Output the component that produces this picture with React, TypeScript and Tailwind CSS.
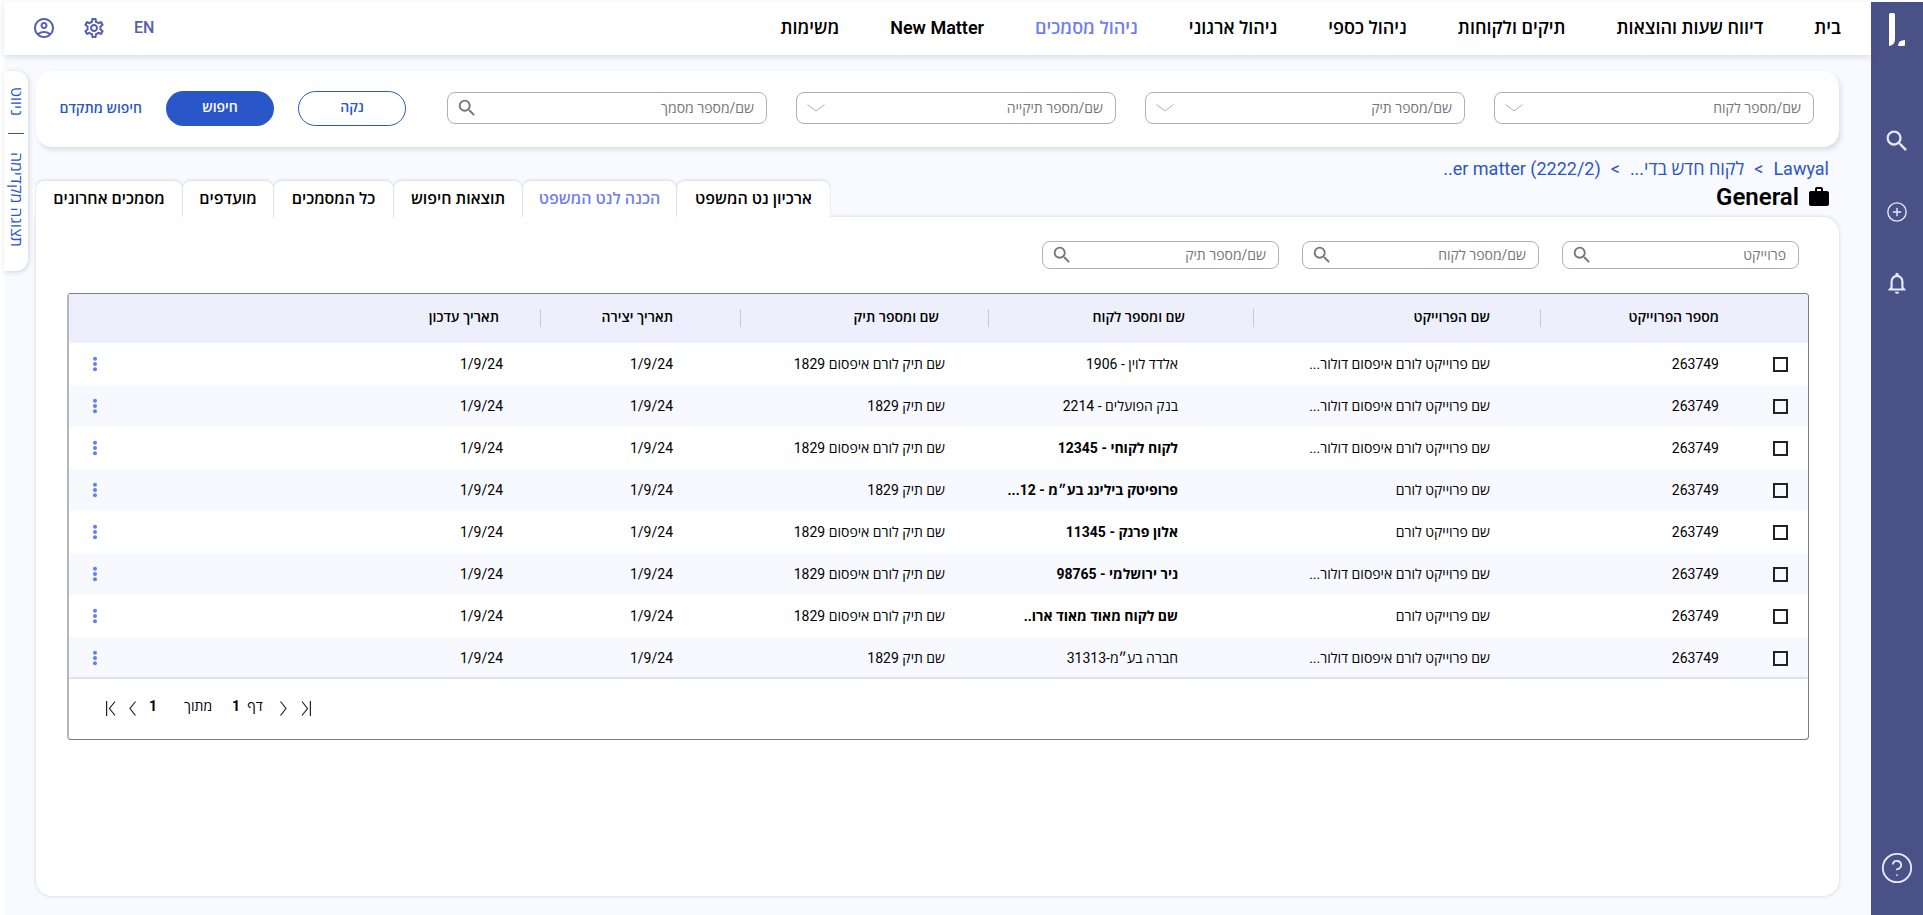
import React, { useState } from 'react';
import {
  MdNotificationsNone, MdOutlineAccountCircle, MdOutlineSettings, MdSearch, MdWork
} from 'react-icons/md';
import { CircleHelp, CirclePlus } from 'lucide-react';

interface Row {
  project: string;
  client: string;
  matter: string;
  bold?: boolean;
}

const NAV = [
  'בית', 'דיווח שעות והוצאות', 'תיקים ולקוחות', 'ניהול כספי',
  'ניהול ארגוני', 'ניהול מסמכים', 'New Matter', 'משימות'
];

const TABS = [
  { label: 'ארכיון נט המשפט', width: 'w-[153px]' },
  { label: 'הכנה לנט המשפט', width: 'w-[153px]' },
  { label: 'תוצאות חיפוש', width: 'w-32' },
  { label: 'כל המסמכים', width: 'w-[119px]' },
  { label: 'מועדפים', width: 'w-[90px]' },
  { label: 'מסמכים אחרונים', width: 'w-[146px]' }
];

const LONG_PROJECT = 'שם פרוייקט לורם איפסום דולור...';
const SHORT_PROJECT = 'שם פרוייקט לורם';
const LONG_MATTER = 'שם תיק לורם איפסום 1829';
const SHORT_MATTER = 'שם תיק 1829';

const ROWS: Row[] = [
  { project: LONG_PROJECT, client: 'אלדד לוין - 1906', matter: LONG_MATTER },
  { project: LONG_PROJECT, client: 'בנק הפועלים - 2214', matter: SHORT_MATTER },
  { project: LONG_PROJECT, client: 'לקוח לקוחי - 12345', matter: LONG_MATTER, bold: true },
  { project: SHORT_PROJECT, client: 'פרופיטק בילינג בע״מ - 12...', matter: SHORT_MATTER, bold: true },
  { project: SHORT_PROJECT, client: 'אלון פרנק - 11345', matter: LONG_MATTER, bold: true },
  { project: LONG_PROJECT, client: 'ניר ירושלמי - 98765', matter: LONG_MATTER, bold: true },
  { project: SHORT_PROJECT, client: 'שם לקוח מאוד מאוד ארו..', matter: LONG_MATTER, bold: true },
  { project: LONG_PROJECT, client: 'חברה בע״מ-31313', matter: SHORT_MATTER }
];

const Sidebar: React.FC = () => (
  <aside className="flex w-[52px] shrink-0 flex-col items-center bg-[#495187] pt-[11px] pb-[30px] text-[#e6e9ff]">
    <svg width="16" height="33" viewBox="0 0 16 33" fill="#fff" aria-hidden="true">
      <path d="M0 1.5Q0 0 1.5 0H4.500Q6 0 6 1.500V26Q6 32 0 33Z" />
      <path d="M9 33Q9 27 16 27V31.500Q16 33 14.500 33Z" />
    </svg>
    <button type="button" aria-label="חיפוש" className="mt-[81px]"><MdSearch size={28} /></button>
    <button type="button" aria-label="הוספה" className="mt-[46px]"><CirclePlus size={22} strokeWidth={1.5} /></button>
    <button type="button" aria-label="התראות" className="mt-[47px]"><MdNotificationsNone size={26} /></button>
    <button type="button" aria-label="עזרה" className="mt-auto"><CircleHelp size={34} strokeWidth={1.3} /></button>
  </aside>
);

const Header: React.FC = () => (
  <header className="relative z-10 flex h-[53px] items-center justify-between bg-white pr-[30px] pb-[2px] pl-[28px] shadow-[0_2px_6px_rgba(60,60,90,0.16)]">
    <nav className="flex gap-[51px] text-[18px] font-semibold text-black">
      {NAV.map(item => (
        <a key={item} href="#" className={item === 'ניהול מסמכים' ? 'text-[#6f7ff0]' : ''}>{item}</a>
      ))}
    </nav>
    <div className="flex items-center text-[#5560b0]">
      <button type="button" className="text-[16px] font-medium">EN</button>
      <button type="button" aria-label="הגדרות" className="mr-[28px]"><MdOutlineSettings size={24} /></button>
      <button type="button" aria-label="פרופיל" className="mr-[26px]"><MdOutlineAccountCircle size={24} /></button>
    </div>
  </header>
);

const SelectField: React.FC<{ label: string }> = ({ label }) => (
  <div className="relative max-w-[320px] flex-1">
    <select
      aria-label={label}
      className="h-8 w-full appearance-none rounded-lg border border-[#b0b0b0] bg-white pr-3 pl-9 text-[14px] text-[#757575]"
    >
      <option>{label}</option>
    </select>
    <svg className="pointer-events-none absolute top-3 left-[11px]" width="18" height="8" viewBox="0 0 18 8" fill="none" stroke="#b0b0b0">
      <path d="M.5.5 9 7l8.500-6.500" />
    </svg>
  </div>
);

const SearchField: React.FC<{ label: string; small?: boolean }> = ({ label, small }) => (
  <div className={small ? 'relative w-[237px]' : 'relative max-w-[320px] flex-1'}>
    <input
      type="text"
      aria-label={label}
      placeholder={label}
      className={`${small ? 'h-7' : 'h-8'} w-full rounded-lg border border-[#b0b0b0] bg-white pr-3 pl-9 text-[14px] placeholder:text-[#757575]`}
    />
    <MdSearch size={22} className={`absolute left-[9px] text-[#757575] ${small ? 'top-[3px]' : 'top-[5px]'}`} />
  </div>
);

const SearchBar: React.FC = () => (
  <form className="flex h-[76px] items-center rounded-2xl bg-white pr-[25px] pb-[2px] pl-[23px] shadow-[2px_3px_5px_rgba(0,0,0,0.12)]">
    <div className="flex flex-1 gap-[29px]">
      <SelectField label="שם/מספר לקוח" />
      <SelectField label="שם/מספר תיק" />
      <SelectField label="שם/מספר תיקייה" />
      <SearchField label="שם/מספר מסמך" />
    </div>
    <div className="mr-[41px] flex items-center gap-6 text-[14px] font-semibold">
      <button type="reset" className="h-[35px] w-[108px] rounded-full border border-[#2956c9] pb-[2px] text-[#2956c9]">נקה</button>
      <button type="button" className="h-[35px] w-[108px] rounded-full bg-[#2956c9] pb-[2px] text-white">חיפוש</button>
      <a href="#" className="w-[83px] whitespace-nowrap text-[#2956c9]">חיפוש מתקדם</a>
    </div>
  </form>
);

const TITLE_CELL = 'flex h-[18px] items-center';

const DocumentsTable: React.FC = () => (
  <table className="w-full table-fixed text-right text-[14px] text-black">
    <colgroup>
      <col className="w-[74px]" />
      <col className="w-[194px]" />
      <col className="w-[287px]" />
      <col className="w-[265px]" />
      <col className="w-[248px]" />
      <col className="w-[200px]" />
      <col />
      <col className="w-[56px]" />
    </colgroup>
    <thead>
      <tr className="h-[49px] bg-[#eeeffd]">
        <td />
        <th className="pb-[2px] font-semibold"><div className={`${TITLE_CELL} border-l border-[#c9c9c9] pr-[15px]`}>מספר הפרוייקט</div></th>
        <th className="pb-[2px] font-semibold"><div className={`${TITLE_CELL} border-l border-[#c9c9c9] pr-[50px]`}>שם הפרוייקט</div></th>
        <th className="pb-[2px] font-semibold"><div className={`${TITLE_CELL} border-l border-[#c9c9c9] pr-[68px]`}>שם ומספר לקוח</div></th>
        <th className="pb-[2px] font-semibold"><div className={`${TITLE_CELL} border-l border-[#c9c9c9] pr-[49px]`}>שם ומספר תיק</div></th>
        <th className="pb-[2px] font-semibold"><div className={`${TITLE_CELL} border-l border-[#c9c9c9] pr-[67px]`}>תאריך יצירה</div></th>
        <th className="pb-[2px] font-semibold"><div className={`${TITLE_CELL} pr-[41px]`}>תאריך עדכון</div></th>
        <td />
      </tr>
    </thead>
    <tbody>
      {ROWS.map((row, index) => (
        <tr key={index} className="h-[42px] even:bg-[#f8f9ff]">
          <td className="pr-5">
            <input
              type="checkbox"
              aria-label={row.client}
              className="block size-[15px] appearance-none border-2 border-[#222] checked:bg-[#2956c9]"
            />
          </td>
          <td className="pr-[15px]">263749</td>
          <td className="pr-[50px] whitespace-nowrap">{row.project}</td>
          <td className={`pr-[75px] whitespace-nowrap ${row.bold ? 'font-bold' : ''}`}>{row.client}</td>
          <td className="pr-[43px] whitespace-nowrap">{row.matter}</td>
          <td className="pr-[67px]">1/9/24</td>
          <td className="pr-[37px]">1/9/24</td>
          <td className="pl-[22px]">
            <button type="button" aria-label="פעולות" className="mr-auto block">
              <svg width="8" height="16" viewBox="0 0 8 16" fill="#5f7ff2">
                <circle cx="4" cy="2.700" r="2" />
                <circle cx="4" cy="8" r="2" />
                <circle cx="4" cy="13.300" r="2" />
              </svg>
            </button>
          </td>
        </tr>
      ))}
    </tbody>
  </table>
);

const PageArrow: React.FC<{ label: string; d: string; width: number }> = ({ label, d, width }) => (
  <button type="button" aria-label={label} className="mt-1">
    <svg width={width} height="15" viewBox={`0 0 ${width} 15`} fill="none" stroke="#222" strokeWidth="1.2">
      <path d={d} />
    </svg>
  </button>
);

const Pagination: React.FC = () => (
  <div className="flex h-[60px] items-center justify-end pb-[6px] pl-[37px] text-[14px] text-black shadow-[0_-1px_3px_rgba(0,0,0,0.18)]">
    <PageArrow label="עמוד אחרון" width={10} d="M9.400 0v15M1 .5l5.500 7L1 14.500" />
    <div className="mr-[14px] flex"><PageArrow label="הבא" width={7} d="M.5.5l5.500 7-5.500 7" /></div>
    <span className="mr-[17px]">דף</span>
    <b className="mr-[7px]">1</b>
    <span className="mr-[20px]">מתוך</span>
    <b className="mr-[27px]">1</b>
    <div className="mr-[13px] flex"><PageArrow label="הקודם" width={7} d="M6.500.5 1 7.500l5.500 7" /></div>
    <div className="mr-[13px] flex"><PageArrow label="עמוד ראשון" width={10} d="M.6 0v15M9 .5 3.500 7.500l5.500 7" /></div>
  </div>
);

export default function App() {
  const [activeTab, setActiveTab] = useState('כל המסמכים');

  const tabStyle = (label: string) => {
    if (label === activeTab) return 'z-10 h-[37px] -mb-px text-black pb-px';
    if (label === 'הכנה לנט המשפט') return 'h-9 text-[#6f7ff0]';
    return 'h-9 text-black';
  };

  return (
    <div dir="rtl" className="flex min-h-screen bg-white pt-[2px] pl-1 font-[Roboto,'Open_Sans',sans-serif]">
      <Sidebar />
      <div className="flex min-w-0 flex-1 flex-col bg-[#f9faff]">
        <Header />
        <div className="flex flex-1 gap-2 pt-4 pr-8 pb-[19px]">
          <main className="flex min-w-0 flex-1 flex-col">
            <SearchBar />

            <div className="flex h-[70px] justify-between pr-[10px]">
              <div className="pt-[10px]">
                <div className="flex gap-[10px] text-[18px] leading-6 text-[#2956c9]">
                  <a href="#">Lawyal</a>
                  <span>&gt;</span>
                  <a href="#">לקוח חדש בדי...</a>
                  <span>&gt;</span>
                  <a href="#">er matter (2222/2)..</a>
                </div>
                <h1 className="mt-[2px] flex items-center gap-2 text-[24px] leading-7 font-semibold text-black">
                  <MdWork size={24} className="-mr-[2px]" />
                  General
                </h1>
              </div>
              <div role="tablist" className="flex items-end gap-px self-end">
                {TABS.map(tab => (
                  <button
                    key={tab.label}
                    type="button"
                    role="tab"
                    aria-selected={tab.label === activeTab}
                    onClick={() => setActiveTab(tab.label)}
                    className={`relative rounded-t-lg bg-white text-[16px] font-semibold whitespace-nowrap shadow-[0_-1px_3px_rgba(0,0,0,0.14)] [clip-path:inset(-4px_-1px_0_-1px)] ${tab.width} ${tabStyle(tab.label)}`}
                  >
                    {tab.label}
                  </button>
                ))}
              </div>
            </div>

            <section className="flex-1 rounded-2xl rounded-tl-none bg-white pt-6 pr-[30px] pb-8 pl-[31px] shadow-[0_0_4px_rgba(0,0,0,0.16)]">
              <div className="flex gap-[23px] pr-[10px]">
                <SearchField small label="פרוייקט" />
                <SearchField small label="שם/מספר לקוח" />
                <SearchField small label="שם/מספר תיק" />
              </div>
              <div className="mt-6 overflow-hidden rounded border border-[#7a7a85] border-l-2 border-l-[#b5b5ba]">
                <DocumentsTable />
                <Pagination />
              </div>
            </section>
          </main>

          <aside className="flex h-[200px] w-6 flex-col items-center rounded-r-xl bg-white pt-4 text-[16px] leading-6 text-[#2956c9] shadow-[1px_1px_5px_rgba(0,0,0,0.16)]">
            <a href="#" className="[writing-mode:vertical-rl]">ניווט</a>
            <span className="mt-[17px] h-px w-4 bg-[#2956c9]" />
            <a href="#" className="mt-[18px] whitespace-nowrap [writing-mode:vertical-rl]">תצוגה מקדימה</a>
          </aside>
        </div>
      </div>
    </div>
  );
}
